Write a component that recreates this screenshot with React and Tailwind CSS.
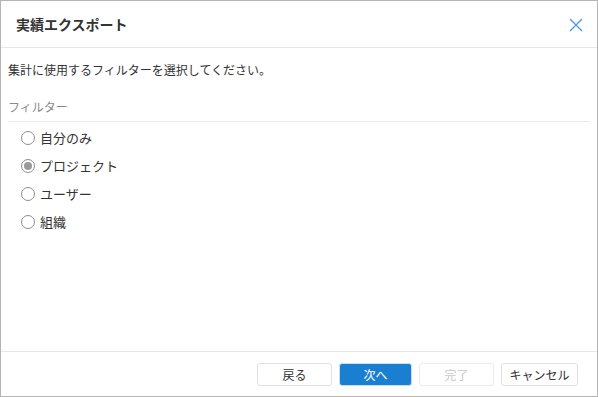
export default function App() {
  const options = ['自分のみ', 'プロジェクト', 'ユーザー', '組織']
  const selected = 1
  const font = { fontFamily: '"Noto Sans CJK JP", "Noto Sans", sans-serif' }

  return (
    <div className="w-[598px] h-[397px] bg-white border border-[#b4b4b4] flex flex-col text-[#333]" style={font}>
      <div className="h-[47px] shrink-0 border-b border-[#e6e6e6] flex items-center justify-between pl-[15px] pr-[14px]">
        <h1 className="text-[14px] font-bold text-[#333]">実績エクスポート</h1>
        <svg width="14" height="14" viewBox="0 0 14 14" className="mt-[2px]">
          <path d="M1 1 L13 13 M13 1 L1 13" stroke="#4a9be0" strokeWidth="1.4" fill="none" />
        </svg>
      </div>

      <div className="flex-1 px-[7px]">
        <p className="text-[12px] leading-[16px] mt-[14px] text-[#333]">集計に使用するフィルターを選択してください。</p>
        <div className="mt-[21px] text-[12px] leading-[16px] text-[#8a8a8a] pb-[6px] border-b border-[#ececec]">フィルター</div>
        <div className="flex flex-col pt-[6px] pl-[13px] gap-[8px]">
          {options.map((o, i) => (
            <label key={o} className="flex items-center gap-[5px] h-[20px] text-[13px]">
              <span className="w-[14px] h-[14px] rounded-full border border-[#8e8e8e] bg-white flex items-center justify-center">
                {i === selected && <span className="w-[8px] h-[8px] rounded-full bg-[#9a9a9a]" />}
              </span>
              <span>{o}</span>
            </label>
          ))}
        </div>
      </div>

      <div className="h-[45px] shrink-0 border-t border-[#e6e6e6] flex items-center justify-end gap-[7px] pr-[19px] pt-[1px]">
        <button className="w-[75px] h-[23px] rounded-[3px] border border-[#e0e0e0] bg-white text-[12px] text-[#333]">戻る</button>
        <button className="w-[73px] h-[23px] rounded-[3px] border border-[#c8dff3] bg-[#1a7fd1] text-[12px] text-white">次へ</button>
        <button className="w-[75px] h-[23px] rounded-[3px] border border-[#ececec] bg-white text-[12px] text-[#c8c8c8]">完了</button>
        <button className="w-[77px] h-[23px] rounded-[3px] border border-[#e0e0e0] bg-white text-[12px] text-[#333]">キャンセル</button>
      </div>
    </div>
  )
}
